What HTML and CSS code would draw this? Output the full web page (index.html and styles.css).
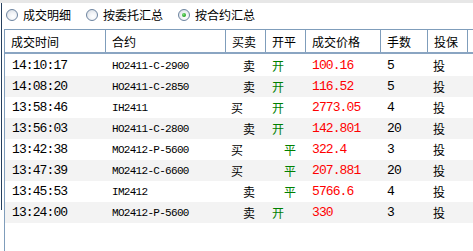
FILE: index.html
```html
<!DOCTYPE html>
<html lang="zh">
<head>
<meta charset="utf-8">
<title>成交</title>
<link rel="stylesheet" href="styles.css">
</head>
<body>
<div class="topstrip"></div>
<div class="main">
  <div class="radios">
    <label class="opt"><span class="radio"></span><span class="lbl">成交明细</span></label>
    <label class="opt"><span class="radio"></span><span class="lbl">按委托汇总</span></label>
    <label class="opt"><span class="radio on"></span><span class="lbl">按合约汇总</span></label>
  </div>
  <div class="grid">
    <div class="head">
      <div class="hc">成交时间</div>
      <div class="hc">合约</div>
      <div class="hc">买卖</div>
      <div class="hc">开平</div>
      <div class="hc">成交价格</div>
      <div class="hc">手数</div>
      <div class="hc">投保</div>
      <div class="hc last"></div>
    </div>
    <div class="rows">
      <div class="row"><span class="c t">14:10:17</span><span class="c k">HO2411-C-2900</span><span class="c z ind">卖</span><span class="c g">开</span><span class="c p">100.16</span><span class="c q">5</span><span class="c z">投</span></div>
      <div class="row alt"><span class="c t">14:08:20</span><span class="c k">HO2411-C-2850</span><span class="c z ind">卖</span><span class="c g">开</span><span class="c p">116.52</span><span class="c q">5</span><span class="c z">投</span></div>
      <div class="row"><span class="c t">13:58:46</span><span class="c k">IH2411</span><span class="c z">买</span><span class="c g">开</span><span class="c p">2773.05</span><span class="c q">4</span><span class="c z">投</span></div>
      <div class="row alt"><span class="c t">13:56:03</span><span class="c k">HO2411-C-2800</span><span class="c z ind">卖</span><span class="c g">开</span><span class="c p">142.801</span><span class="c q">20</span><span class="c z">投</span></div>
      <div class="row"><span class="c t">13:42:38</span><span class="c k">MO2412-P-5600</span><span class="c z">买</span><span class="c g ind">平</span><span class="c p">322.4</span><span class="c q">3</span><span class="c z">投</span></div>
      <div class="row alt"><span class="c t">13:47:39</span><span class="c k">MO2412-C-6600</span><span class="c z">买</span><span class="c g ind">平</span><span class="c p">207.881</span><span class="c q">20</span><span class="c z">投</span></div>
      <div class="row"><span class="c t">13:45:53</span><span class="c k">IM2412</span><span class="c z ind">卖</span><span class="c g ind">平</span><span class="c p">5766.6</span><span class="c q">4</span><span class="c z">投</span></div>
      <div class="row alt"><span class="c t">13:24:00</span><span class="c k">MO2412-P-5600</span><span class="c z ind">卖</span><span class="c g">开</span><span class="c p">330</span><span class="c q">3</span><span class="c z">投</span></div>
    </div>
  </div>
</div>
</body>
</html>
```
FILE: styles.css
```css
html, body {
  margin: 0;
  padding: 0;
  overflow: hidden;
  background: #ffffff;
}
body {
  width: 473px;
  height: 251px;
  font-family: "Noto Sans CJK SC", "Noto Sans", sans-serif;
  font-size: 12px;
  color: #000;
}
.topstrip {
  height: 3px;
  background: #e7e7e7;
}
.main {
  height: 248px;
  display: flex;
  flex-direction: column;
  padding-left: 4px;
  background: linear-gradient(#26405e, #26405e) no-repeat 1px 0 / 1px 207px;
}
.radios {
  height: 24px;
  display: flex;
  align-items: center;
  padding-left: 2px;
  gap: 15px;
}
.opt {
  display: flex;
  align-items: center;
  gap: 5px;
}
.radio {
  width: 10px;
  height: 10px;
  border: 1px solid #6d84a0;
  border-radius: 50%;
  background: radial-gradient(circle at 60% 65%, #ffffff 0, #f2f4f7 40%, #cfd6de 100%);
  display: flex;
  align-items: center;
  justify-content: center;
}
.radio.on::after {
  content: "";
  width: 4px;
  height: 4px;
  border-radius: 50%;
  background: radial-gradient(circle at 40% 35%, #7be07b 0, #22a022 70%);
}
.lbl {
  line-height: 16px;
}
.grid {
  flex: 1;
  margin-top: 2px;
  border-left: 1px solid #7f9dbb;
  display: flex;
  flex-direction: column;
}
.head, .row {
  display: grid;
  grid-template-columns: 101px 120px 40px 40px 75px 47px 40px 1fr;
}
.head {
  border-top: 1px solid #7f9dbb;
  border-bottom: 2px solid #8aa5c2;
  height: 22px;
}
.hc {
  border-right: 1px solid #7f9dbb;
  padding-left: 6px;
  display: flex;
  align-items: center;
  line-height: 14px;
  padding-top: 1px;
}
.hc.last {
  border-right: none;
}
.rows {
  padding-top: 1px;
}
.row {
  height: 21px;
  align-items: center;
}
.row.alt {
  background: #f3f3f3;
}
.c {
  padding-left: 7px;
  white-space: nowrap;
  line-height: 14px;
}
.t, .p, .q {
  font-family: "Liberation Mono", "DejaVu Sans Mono", monospace;
  font-size: 13px;
  letter-spacing: -0.9px;
}
.k {
  font-family: "Liberation Mono", "DejaVu Sans Mono", monospace;
  font-size: 11px;
  letter-spacing: -0.7px;
  padding-left: 6px;
}
.z {
  padding-left: 5px;
}
.g {
  color: #008000;
  padding-left: 6px;
}
.p {
  color: #ff0000;
  padding-left: 6px;
}
.q {
  padding-left: 6px;
}
.c.ind {
  padding-left: 17px;
}
.g.ind {
  padding-left: 18px;
}
```
